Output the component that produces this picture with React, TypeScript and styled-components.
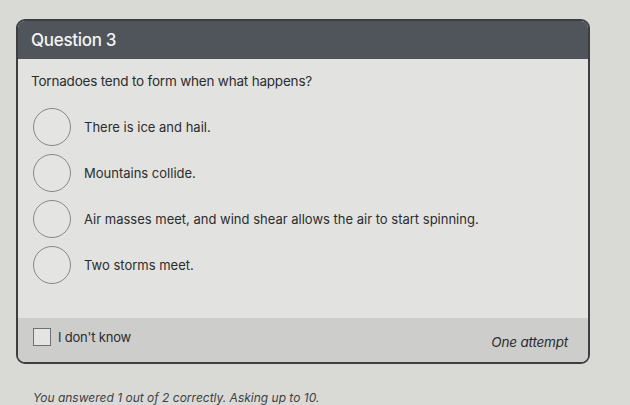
import { ReactElement } from 'react';
import styled, { createGlobalStyle } from 'styled-components';

//
// Styles
//

const GlobalStyle = createGlobalStyle`
  html, body {
    margin: 0;
    padding: 0;
    background: #d9dad6;
  }

  body {
    font-family: Inter, "Noto Sans", "Liberation Sans", sans-serif;
    color: #2b2c2e;
  }
`;

const PageDiv = styled.div`
  width: 630px;
  height: 405px;
  overflow: hidden;
  padding: 19px 0 0 16px;
  box-sizing: border-box;
`;

const CardDiv = styled.div`
  width: 570px;
  border: 2px solid #3c3e42;
  border-radius: 9px;
  overflow: hidden;
  background: #e2e3e0;
`;

const HeaderDiv = styled.div`
  height: 38px;
  padding: 0 13px;
  display: flex;
  align-items: center;
  background: #50555b;
  color: #f4f4f4;
  font-size: 17px;
  font-weight: 500;
  letter-spacing: -0.3px;
`;

const BodyDiv = styled.div`
  padding: 12px 13px 34px;
`;

const PromptP = styled.p`
  margin: 0 0 17px;
  font-size: 13.5px;
  line-height: 20px;
  letter-spacing: -0.2px;
`;

const OptionList = styled.div`
  display: flex;
  flex-direction: column;
  gap: 8px;
  padding-left: 2px;
`;

const OptionLabel = styled.label`
  display: flex;
  align-items: center;
  gap: 13px;
  cursor: pointer;
  font-size: 13px;
`;

const RadioCircle = styled.span`
  width: 38px;
  height: 38px;
  flex-shrink: 0;
  box-sizing: border-box;
  border: 1.5px solid #85878a;
  border-radius: 50%;
  background: #e4e5e2;
`;

const FooterDiv = styled.div`
  height: 44px;
  padding: 0 20px 0 15px;
  display: flex;
  align-items: center;
  justify-content: space-between;
  background: #cdcecb;
  font-size: 13px;
  letter-spacing: -0.2px;
`;

const CheckLabel = styled.label`
  display: flex;
  align-items: center;
  gap: 7px;
  margin-top: -6px;
`;

const CheckBox = styled.span`
  width: 16px;
  height: 16px;
  border: 1.5px solid #6e7073;
  background: #e4e5e2;
`;

const AttemptSpan = styled.span`
  font-style: italic;
  font-size: 13.5px;
  margin-top: 3px;
`;

const StatusP = styled.p`
  margin: 26px 0 0 17px;
  font-size: 12px;
  font-style: italic;
  color: #3e4044;
`;

//
// Component
//

const options = [
  'There is ice and hail.',
  'Mountains collide.',
  'Air masses meet, and wind shear allows the air to start spinning.',
  'Two storms meet.',
];

const App = (): ReactElement => (
  <PageDiv>
    <GlobalStyle />
    <CardDiv>
      <HeaderDiv>Question 3</HeaderDiv>
      <BodyDiv>
        <PromptP>Tornadoes tend to form when what happens?</PromptP>
        <OptionList>
          {options.map((text) => (
            <OptionLabel key={text}>
              <RadioCircle />
              {text}
            </OptionLabel>
          ))}
        </OptionList>
      </BodyDiv>
      <FooterDiv>
        <CheckLabel>
          <CheckBox />
          I don&apos;t know
        </CheckLabel>
        <AttemptSpan>One attempt</AttemptSpan>
      </FooterDiv>
    </CardDiv>
    <StatusP>You answered 1 out of 2 correctly. Asking up to 10.</StatusP>
  </PageDiv>
);

export default App;
